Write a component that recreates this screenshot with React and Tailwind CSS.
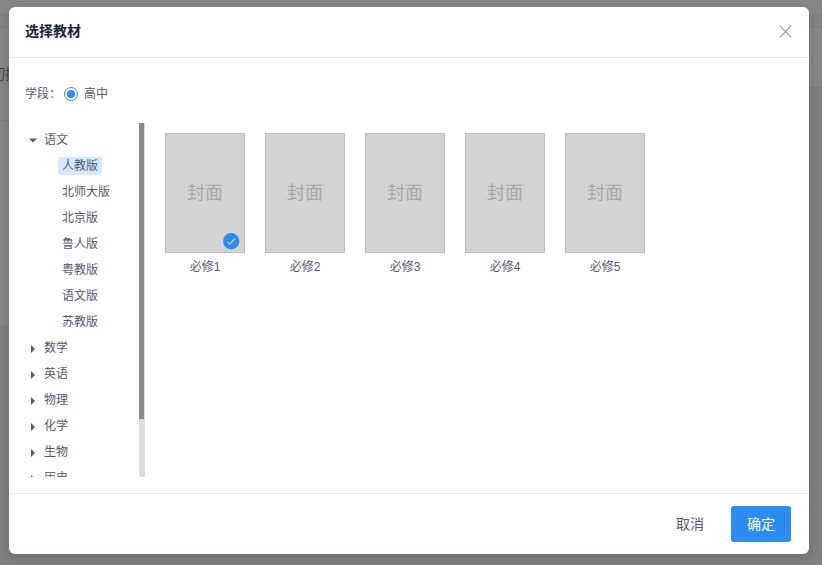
const editions = ['人教版', '北师大版', '北京版', '鲁人版', '粤教版', '语文版', '苏教版'];
const subjects = ['数学', '英语', '物理', '化学', '生物', '历史'];
const books = ['必修1', '必修2', '必修3', '必修4', '必修5'];

function Backdrop() {
  return (
    <div className="absolute inset-0 flex flex-col bg-[#868686] text-[14px] text-[#484848]">
      <div className="h-[14px]" />
      <div className="h-[14px] border-y border-[#7b7c7d] bg-[#818385]" />
      <div className="flex flex-1">
        <div className="flex w-[411px] flex-col">
          <div className="relative h-[93px] overflow-hidden border-b border-[#7b7c7d]">
            <span className="absolute -left-[9px] top-[36px] leading-5">切换</span>
          </div>
          <div className="h-[206px] border-b border-[#7b7c7d]" />
          <div className="flex-1 bg-[#7f8183]" />
        </div>
        <div className="flex flex-1 flex-col">
          <div className="h-[60px] border-b border-[#7b7c7d]" />
          <div className="flex-1 bg-[#7f8183]" />
        </div>
      </div>
    </div>
  );
}

function Header() {
  return (
    <header className="flex h-[51px] items-center justify-between border-b border-[#e8eaec] pb-[2px] pl-4 pr-[17px]">
      <h1 className="text-[14px] font-bold leading-5 text-[#17233d]">选择教材</h1>
      <svg width="13" height="13" viewBox="0 0 13 13" stroke="#999" strokeWidth="1.1" fill="none">
        <path d="M.7.7l11.6 11.6M12.3.7L.7 12.3" />
      </svg>
    </header>
  );
}

function SubjectTree() {
  return (
    <nav className="flex h-[354px] w-[136px] overflow-hidden">
      <div className="flex-1 pl-[20px] pt-1">
        <div className="flex h-[26px] items-center">
          <svg width="8" height="5" viewBox="0 0 8 5" className="mt-[1px] fill-[#515a6e]"><path d="M0 .5h8L4 4.5z" /></svg>
          <span className="ml-[7px]">语文</span>
        </div>
        {editions.map((name, i) => (
          <div key={name} className="flex h-[26px] items-center pl-[29px]">
            <span className={i === 0 ? 'h-[18px] rounded-[3px] bg-[#d5e8fc] px-1 leading-[18px]' : 'px-1 leading-[18px]'}>{name}</span>
          </div>
        ))}
        {subjects.map((name) => (
          <div key={name} className="flex h-[26px] items-center">
            <svg width="4" height="8" viewBox="0 0 4 8" className="ml-[2px] mt-[2px] fill-[#515a6e]"><path d="M0 0v8l4-4z" /></svg>
            <span className="ml-[9px]">{name}</span>
          </div>
        ))}
      </div>
      <div className="w-[6px] bg-[#ddd]">
        <div className="h-[296px] w-[5px] bg-[#888]" />
      </div>
    </nav>
  );
}

function Book({ name, selected }) {
  return (
    <div className="flex w-20 flex-col items-center">
      <div className="relative flex h-[120px] w-20 items-center justify-center border border-[#bdbdbd] bg-[#d3d3d3] text-[18px] text-[#a6a6a6]">
        封面
        {selected && (
          <svg width="17" height="17" viewBox="0 0 17 17" className="absolute bottom-[2px] right-[4px]">
            <circle cx="8.2" cy="8.2" r="8.2" fill="#2d8cf0" />
            <path d="M4.3 8.7l2.5 2.5 5.2-5.6" stroke="#d3d3d3" strokeWidth="1.1" fill="none" />
          </svg>
        )}
      </div>
      <span className="mt-[5px] leading-[18px]">{name}</span>
    </div>
  );
}

export default function App() {
  return (
    <div className="relative h-[565px] w-[822px] overflow-hidden font-['Liberation_Sans','Noto_Sans_CJK_SC',sans-serif] text-[12px] leading-[18px] text-[#515a6e]">
      <Backdrop />
      <div className="relative ml-[9px] pt-[7px]">
        <section className="flex h-[547px] w-[800px] flex-col rounded-[6px] bg-white shadow-[0_4px_12px_rgba(0,0,0,0.15)]">
          <Header />
          <main className="flex-1">
            <div className="flex h-[65px] items-center pl-4 pt-[6px]">
              <span className="w-[39px] whitespace-nowrap">学段：</span>
              <span className="flex size-[14px] items-center justify-center rounded-full border border-[#2d8cf0]">
                <span className="size-2 rounded-full bg-[#2d8cf0]" />
              </span>
              <span className="ml-[6px]">高中</span>
            </div>
            <div className="flex">
              <SubjectTree />
              <div className="flex gap-5 pl-5 pt-[10px]">
                {books.map((name, i) => <Book key={name} name={name} selected={i === 0} />)}
              </div>
            </div>
          </main>
          <footer className="flex h-[61px] items-center justify-end border-t border-[#e8eaec] pr-[18px] text-[14px]">
            <button className="mr-[27px]">取消</button>
            <button className="h-9 w-[60px] rounded-[3px] bg-[#2d8cf0] text-white">确定</button>
          </footer>
        </section>
      </div>
    </div>
  );
}
